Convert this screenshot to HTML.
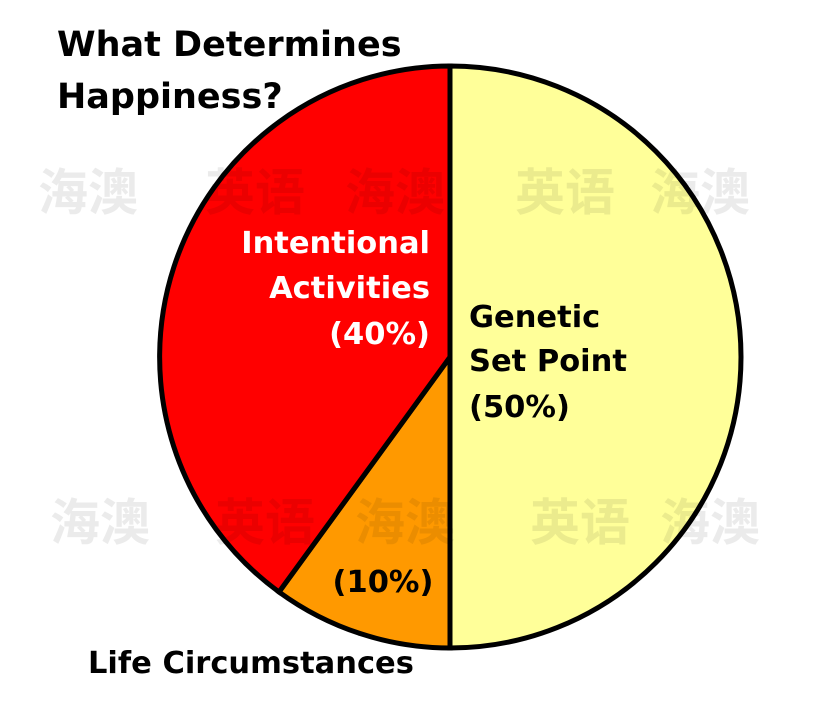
<!DOCTYPE html>
<html><head><meta charset="utf-8"><style>
html,body{margin:0;padding:0;background:#fff;}
body{width:813px;height:714px;overflow:hidden;position:relative;}
svg{position:absolute;left:0;top:0;}
</style></head><body>
<svg width="813" height="714" viewBox="0 0 813 714" xmlns="http://www.w3.org/2000/svg">
<!-- pie -->
<path d="M450,357 L450,66 A291,291 0 0 1 450,648 Z" fill="#ffff99" stroke="#000" stroke-width="5"/>
<path d="M450,357 L450,648 A291,291 0 0 1 279,592 Z" fill="#ff9900" stroke="#000" stroke-width="5"/>
<path d="M450,357 L279,592 A291,291 0 0 1 450,66 Z" fill="#ff0000" stroke="#000" stroke-width="5"/>
<g font-family="'Liberation Sans','Noto Sans CJK SC',sans-serif" font-weight="bold" font-size="50" fill="#000" fill-opacity="0.08">
<text x="38" y="210">海澳</text><text x="205" y="210">英语</text><text x="345" y="210">海澳</text><text x="515" y="210">英语</text><text x="650" y="210">海澳</text>
<text x="50" y="540">海澳</text><text x="215" y="540">英语</text><text x="355" y="540">海澳</text><text x="530" y="540">英语</text><text x="660" y="540">海澳</text>
</g>
<g font-family="'DejaVu Sans','Liberation Sans',sans-serif" font-weight="bold">
<text x="57" y="56" font-size="35" fill="#000">What Determines</text>
<text x="57" y="108" font-size="35" fill="#000">Happiness?</text>
<g font-size="30.5" fill="#fff" text-anchor="end">
<text x="430" y="253">Intentional</text>
<text x="430" y="298">Activities</text>
<text x="430" y="344">(40%)</text>
</g>
<g font-size="30.5" fill="#000">
<text x="469" y="327">Genetic</text>
<text x="469" y="371">Set Point</text>
<text x="469" y="417">(50%)</text>
<text x="383" y="592" text-anchor="middle">(10%)</text>
<text x="88" y="673" font-size="30.5">Life Circumstances</text>
</g>
</g>
</svg>
</body></html>
